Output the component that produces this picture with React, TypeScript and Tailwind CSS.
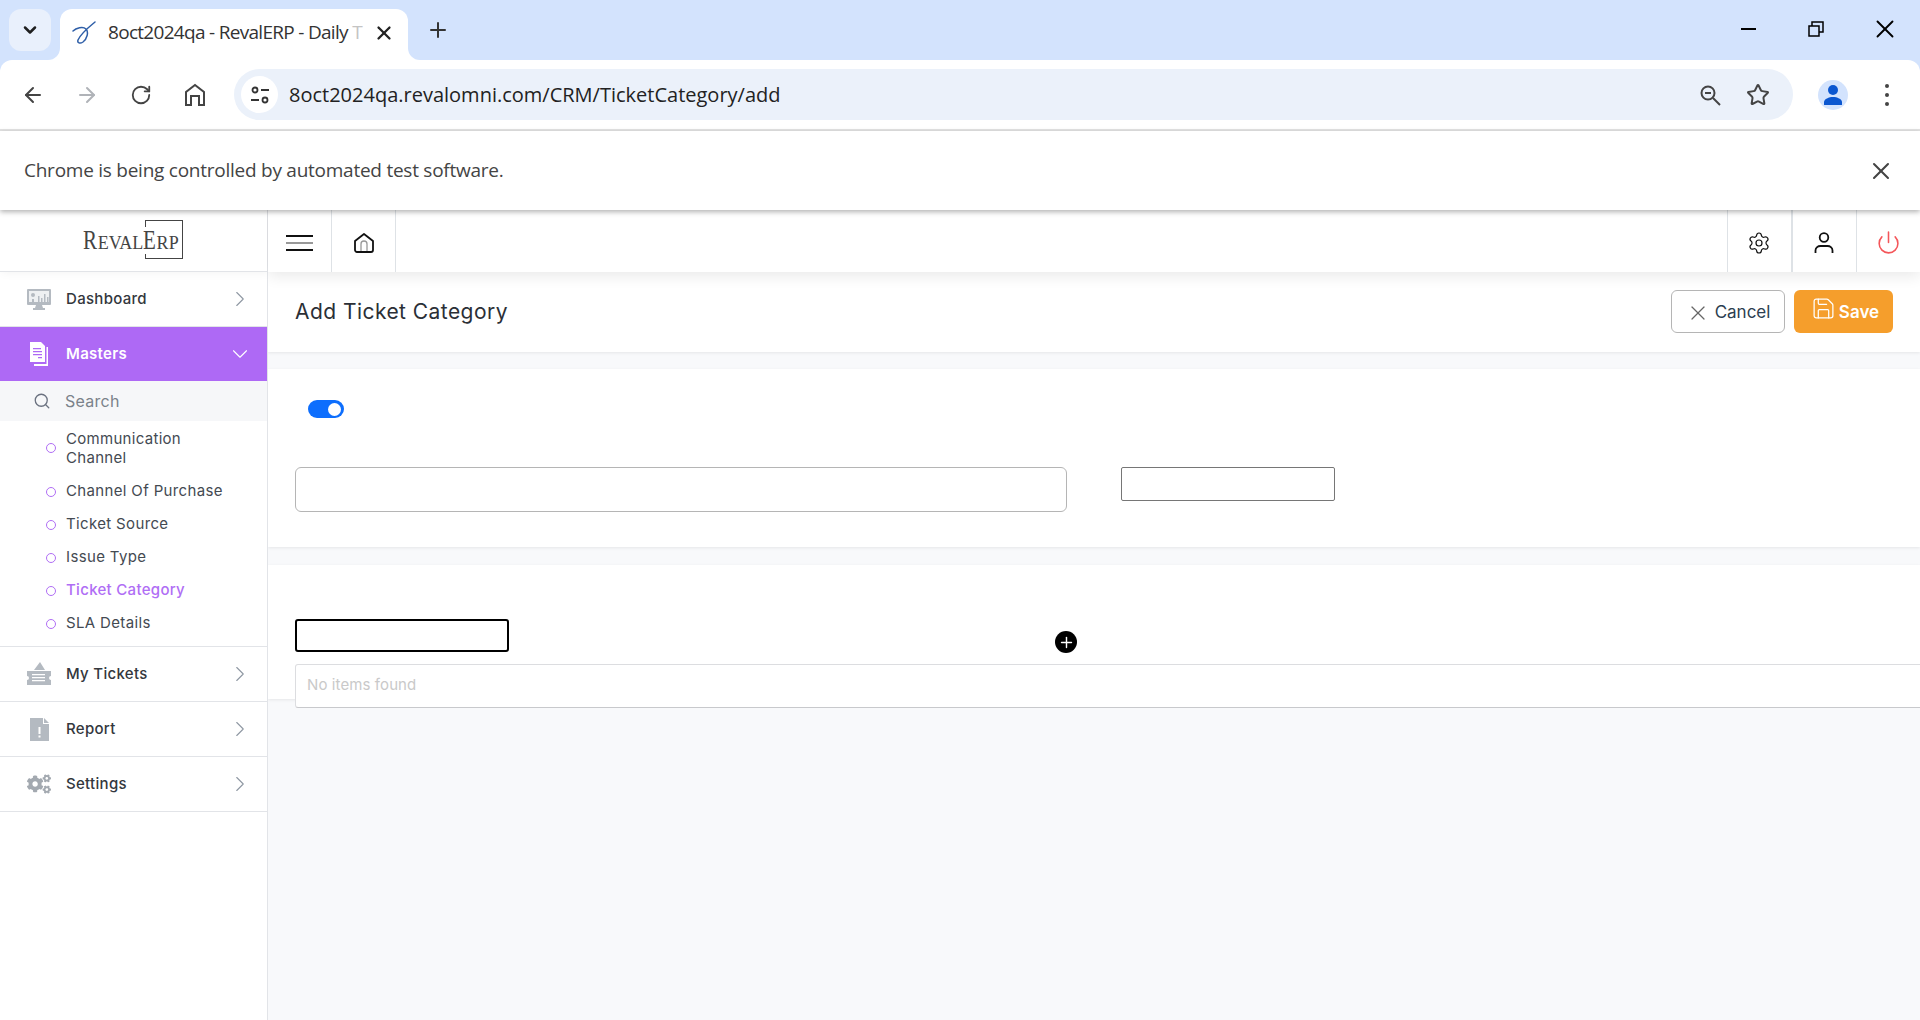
import { ArrowLeft, ArrowRight, ChevronDown, ChevronRight, Plus, Power, RotateCw, Save, Search, Settings, Star, X } from "lucide-react";
import { FaCogs } from "react-icons/fa";

const subItems = ["Channel Of Purchase", "Ticket Source", "Issue Type", "Ticket Category", "SLA Details"];

function Ring() {
  return <span className="block h-[10px] w-[10px] shrink-0 rounded-full border-[1.5px] border-[#b06ef5]" />;
}

function DashIcon() {
  return (
    <svg width="24" height="21" viewBox="0 0 24 21" fill="#b4bac1">
      <path d="M1 0h22a1 1 0 0 1 1 1v14a1 1 0 0 1-1 1H1a1 1 0 0 1-1-1V1a1 1 0 0 1 1-1z" />
      <path d="M2 2h20v11H2z" fill="#eef0f2" />
      <path d="M9 16h6l1 3H8zM6 19h12v2H6z" />
      <circle cx="6" cy="6" r="2" />
      <path d="M11 7h1.5v6H11zM14 9h1.5v4H14zM17 5h1.5v8H17zM20 8h1.5v5H20zM5 10h2v3H5z" />
    </svg>
  );
}

function DocsIcon() {
  return (
    <svg width="18" height="24" viewBox="0 0 18 24" fill="#fff">
      <path d="M0 0h11l4 4v16H0z" />
      <path d="M16.500 5H18v19H4v-2h12.500z" />
      <path d="M3 6h8v1.300H3zM3 9h9v1.300H3zM3 12h9v1.300H3zM8 15h4v1.300H8z" fill="#ae69f5" />
    </svg>
  );
}

function TicketIcon() {
  return (
    <svg width="24" height="24" viewBox="0 0 24 24" fill="#b4bac1">
      <path d="M7 8l6-8 5 8z" />
      <path d="M0 9h24v5a2 2 0 0 0 0 4v5H0v-5a2 2 0 0 0 0-4z" />
      <path d="M5 12h13v1.300H5zM5 15h13v1.300H5zM5 18h13v1.300H5z" fill="#fff" />
    </svg>
  );
}

function ReportIcon() {
  return (
    <svg width="19" height="23" viewBox="0 0 19 23" fill="#b4bac1">
      <path d="M0 0h13v6h6v17H0z" />
      <path d="M14 0l5 5h-5z" />
      <path d="M8.500 9h2v7h-2zM8.500 17.500h2v2h-2z" fill="#fff" />
    </svg>
  );
}

function NavRow({ label, icon }: { label: string; icon: React.ReactNode }) {
  return (
    <div className="flex h-[55px] items-center border-b border-[#e2e4e8] pr-[14px]">
      <span className="flex w-[66px] shrink-0 items-center justify-center pl-[13px] pr-[1px]">{icon}</span>
      <span className="flex-1 text-[15px] font-medium tracking-[0.3px] text-[#33373d]">{label}</span>
      <ChevronRight size={26} strokeWidth={1} className="text-[#8f98a3]" />
    </div>
  );
}

function HeadCell({ children }: { children: React.ReactNode }) {
  return <div className="flex h-full w-[64px] items-center justify-center border-r border-[#dee2e6] pt-[3px]">{children}</div>;
}

function BarButton({ children }: { children: React.ReactNode }) {
  return <div className="flex h-[54px] w-[54px] shrink-0 items-center justify-center">{children}</div>;
}

export default function App() {
  return (
    <div className="flex h-[1020px] w-[1920px] flex-col overflow-hidden bg-white font-['Open_Sans',sans-serif]">
      {/* browser tab strip */}
      <div className="flex h-[60px] shrink-0 items-start bg-[#d3e3fd] pt-[9px]">
        <div className="ml-[9px] flex h-[42px] w-[42px] items-center justify-center rounded-[12px] bg-[#e9f0fc]">
          <ChevronDown size={20} strokeWidth={3} className="text-[#1f1f1f]" />
        </div>
        <div className="relative ml-[9px] flex h-[51px] w-[348px] items-center rounded-t-[12px] bg-white pb-[4px]">
          <span className="absolute bottom-0 left-[-12px] h-[12px] w-[12px] bg-white">
            <span className="block h-full w-full rounded-br-[12px] bg-[#d3e3fd]" />
          </span>
          <span className="absolute bottom-0 right-[-12px] h-[12px] w-[12px] bg-white">
            <span className="block h-full w-full rounded-bl-[12px] bg-[#d3e3fd]" />
          </span>
          <svg width="24" height="24" viewBox="0 0 24 24" fill="none" className="ml-[12px]">
            <path d="M23 1C17 6 9 12 6 19c-1 3 2 4 5 2 4-3 6-10 3-13C11 5 4 7 1 10" stroke="#2f5fa8" strokeWidth="1.500" strokeLinecap="round" />
          </svg>
          <span className="ml-[12px] w-[251px] whitespace-nowrap text-[19px] tracking-[-0.7px] text-[#333]">8oct2024qa - RevalERP - Daily <span className="text-[#c4c4c4]">T</span></span>
          <X size={22} strokeWidth={2.500} className="ml-[14px] text-[#222]" />
        </div>
        <Plus size={24} strokeWidth={2} className="ml-[18px] mt-[9px] text-[#333]" />
        <div className="ml-auto flex items-center pr-[5px] pt-[5px]">
          <span className="mr-[52px] block h-[2px] w-[15px] bg-black" />
          <svg width="16" height="16" viewBox="0 0 16 16" fill="none" stroke="#000" strokeWidth="1.500" className="mr-[46px]">
            <path d="M1 5h10v10H1zM4 5V1h11v10h-4" />
          </svg>
          <X size={30} strokeWidth={1.500} className="mr-[15px] text-black" />
        </div>
      </div>

      {/* browser toolbar */}
      <div className="flex h-[71px] shrink-0 items-start border-b-2 border-[#e3e3e3] bg-[#d3e3fd]">
        <div className="flex h-full w-full items-center rounded-t-[12px] bg-white pl-[6px] pr-[6px]">
          <BarButton><ArrowLeft size={24} strokeWidth={2} className="text-[#444]" /></BarButton>
          <BarButton><ArrowRight size={24} strokeWidth={2} className="text-[#b0b3b8]" /></BarButton>
          <BarButton><RotateCw size={22} strokeWidth={2} className="text-[#444]" /></BarButton>
          <BarButton>
            <svg width="22" height="24" viewBox="0 0 22 24" fill="none" stroke="#444" strokeWidth="2">
              <path d="M2 22V9l9-7 9 7v13h-5v-9H7v9z" />
            </svg>
          </BarButton>
          <div className="ml-[12px] mr-[13px] flex h-[51px] flex-1 items-center rounded-full bg-[#ebf1fa] pl-[7px] pr-[23px]">
            <span className="flex h-[37px] w-[37px] items-center justify-center rounded-full bg-white">
              <svg width="20" height="20" viewBox="0 0 20 20" fill="none" stroke="#333" strokeWidth="1.800">
                <circle cx="5" cy="5" r="2.500" />
                <path d="M11 5h8M1 15h8" />
                <circle cx="15" cy="15" r="2.500" />
              </svg>
            </span>
            <span className="ml-[11px] flex-1 text-[20px] text-[#222]">8oct2024qa.revalomni.com/CRM/TicketCategory/add</span>
            <svg width="24" height="24" viewBox="0 0 24 24" fill="none" stroke="#444" strokeWidth="2" className="mr-[24px]">
              <circle cx="10" cy="10" r="6.500" />
              <path d="M7 10h6" />
              <path d="M15 15l7 7" />
            </svg>
            <Star size={24} strokeWidth={2} className="text-[#444]" />
          </div>
          <BarButton>
            <span className="flex h-[30px] w-[30px] items-center justify-center rounded-full bg-[#d3e3fd]">
              <svg width="20" height="22" viewBox="0 0 20 22" fill="#0b57d0">
                <circle cx="10" cy="6" r="5" />
                <path d="M1 21v-3c0-3 5-5 9-5s9 2 9 5v3z" />
              </svg>
            </span>
          </BarButton>
          <BarButton>
            <span className="flex flex-col gap-[5px]">
              <span className="block h-[4px] w-[4px] rounded-full bg-[#444]" />
              <span className="block h-[4px] w-[4px] rounded-full bg-[#444]" />
              <span className="block h-[4px] w-[4px] rounded-full bg-[#444]" />
            </span>
          </BarButton>
        </div>
      </div>

      {/* automation infobar */}
      <div className="relative z-20 flex h-[79px] shrink-0 items-center justify-between bg-white pl-[24px] pr-[25px] shadow-[0_2px_5px_rgba(0,0,0,0.3)]">
        <span className="text-[19px] tracking-[-0.25px] text-[#444]">Chrome is being controlled by automated test software.</span>
        <X size={28} strokeWidth={1.750} className="text-[#444]" />
      </div>

      {/* app */}
      <div className="flex min-h-0 flex-1 font-[Inter,sans-serif]">
        <aside className="w-[268px] shrink-0 border-r border-[#e2e4e8] bg-white">
          <div className="flex h-[62px] items-center border-b border-[#e2e4e8] pl-[83px] shadow-[2px_0_10px_rgba(0,0,0,0.06)]">
            <div className="relative mb-[3px] flex h-[39px] w-[100px] items-baseline pt-[6px] font-['Liberation_Serif',serif] leading-none text-[#444]">
              <span className="mr-[-4px] inline-block origin-left scale-x-[0.75] text-[28px]">R</span>
              <span className="text-[18px]">EVAL</span>
              <span className="mr-[-4px] inline-block origin-left scale-x-[0.75] text-[28px]">E</span>
              <span className="text-[18px] tracking-[0.3px]">RP</span>
              <span className="absolute left-[62px] top-0 h-[7px] w-[38px] border-x-[1.5px] border-t-[1.5px] border-x-[#444] border-t-[#444]" />
              <span className="absolute bottom-0 left-[62px] h-[5px] w-[38px] border-x-[1.5px] border-b-[1.5px] border-x-[#444] border-b-[#444]" />
              <span className="absolute bottom-0 left-[98.5px] top-0 border-r-[1.5px] border-[#444]" />
            </div>
          </div>
          <NavRow label="Dashboard" icon={<DashIcon />} />
          <div className="flex h-[54px] items-center bg-[#ae69f5] pr-[14px] text-white">
            <span className="flex w-[66px] shrink-0 items-center justify-center pl-[13px] pr-[1px]"><DocsIcon /></span>
            <span className="flex-1 text-[15px] font-semibold tracking-[0.3px]">Masters</span>
            <ChevronDown size={26} strokeWidth={1} />
          </div>
          <div className="flex h-[40px] items-center gap-[14px] bg-[#f6f7f9] pl-[33px]">
            <Search size={18} strokeWidth={1.750} className="text-[#6b7280]" />
            <span className="text-[16px] tracking-[0.25px] text-[#7b828a]">Search</span>
          </div>
          <div className="border-b border-[#e2e4e8] pb-[9px] pl-[46px] pt-[7px]">
            <div className="mb-[11px] flex h-[39px] items-center gap-[10px]">
              <Ring />
              <span className="w-[130px] text-[15px] leading-[19px] tracking-[0.3px] text-[#444a52]">Communication Channel</span>
            </div>
            {subItems.map((item) => (
              <div key={item} className="mt-[6px] flex h-[27px] items-center gap-[10px]">
                <Ring />
                <span className={item === "Ticket Category" ? "text-[15px] font-medium tracking-[0.3px] text-[#b06ef5]" : "text-[15px] tracking-[0.35px] text-[#444a52]"}>{item}</span>
              </div>
            ))}
          </div>
          <NavRow label="My Tickets" icon={<TicketIcon />} />
          <NavRow label="Report" icon={<ReportIcon />} />
          <NavRow label="Settings" icon={<FaCogs size={24} className="text-[#a3a9b0]" />} />
        </aside>

        <main className="min-w-0 flex-1 overflow-hidden bg-[#f8f9fb]">
          <header className="relative z-10 flex h-[62px] items-center justify-between bg-white shadow-[0_4px_14px_rgba(0,0,0,0.09)]">
            <div className="flex h-full">
              <HeadCell>
                <span className="flex flex-col gap-[5px]">
                  <span className="block h-[2px] w-[27px] bg-[#111]" />
                  <span className="block h-[2px] w-[27px] bg-[#999]" />
                  <span className="block h-[2px] w-[27px] bg-[#111]" />
                </span>
              </HeadCell>
              <HeadCell>
                <svg width="20" height="20" viewBox="0 0 20 20" fill="none">
                  <path d="M7 18v-7a3 3 0 0 1 6 0v7" stroke="#999" strokeWidth="1.300" />
                  <path d="M1 17V8l9-7 9 7v9a2 2 0 0 1-2 2H3a2 2 0 0 1-2-2z" stroke="#111" strokeWidth="1.800" strokeLinejoin="round" />
                </svg>
              </HeadCell>
            </div>
            <div className="flex h-full">
              <div className="flex h-full w-[64px] items-center justify-center border-l border-[#dee2e6] pt-[3px]">
                <Settings size={24} strokeWidth={1.200} className="mr-[1px] text-[#111]" />
              </div>
              <div className="flex h-full w-[65px] items-center justify-center border-l-2 border-[#dee2e6] pt-[3px]">
                <svg width="20" height="22" viewBox="0 0 20 22" fill="none" stroke="#111" strokeWidth="1.800" className="mr-[2px]">
                  <circle cx="10" cy="5.500" r="4.300" />
                  <path d="M1.500 21v-2.500c0-3 2.500-4.500 5-4.500h7c2.500 0 5 1.500 5 4.500V21" />
                </svg>
              </div>
              <div className="flex h-full w-[64px] items-center justify-center border-l border-[#dee2e6] pt-[3px]">
                <Power size={25} strokeWidth={1.500} className="mr-[1px] text-[#f4565a]" />
              </div>
            </div>
          </header>

          <div className="flex h-[80px] items-center justify-between bg-white pl-[27px] pr-[27px] shadow-[0_1px_3px_rgba(0,0,0,0.08)]">
            <h1 className="text-[21px] tracking-[0.45px] text-[#2b2f36]">Add Ticket Category</h1>
            <div className="mb-[2px] flex gap-[9px]">
              <button className="flex h-[43px] w-[114px] items-center justify-center gap-[5px] rounded-[6px] border border-[#b5b5b5] bg-white pt-[3px] text-[17px] text-[#2c3e50]">
                <X size={24} strokeWidth={1.200} className="text-[#666]" />
                Cancel
              </button>
              <button className="flex h-[43px] w-[99px] items-center justify-center gap-[3px] rounded-[6px] bg-[#f59e2c] pl-[3px] pt-[3px] text-[17px] font-semibold text-white">
                <Save size={25} strokeWidth={1.200} className="mb-[8px]" />
                Save
              </button>
            </div>
          </div>

          <section className="mt-[17px] h-[178px] bg-white pl-[27px] pt-[31px] shadow-[0_1px_3px_rgba(0,0,0,0.08)]">
            <div className="ml-[13px] flex h-[18px] w-[36px] items-center justify-end rounded-full bg-[#0d6efd] pr-[3px]">
              <span className="block h-[13px] w-[13px] rounded-full bg-white" />
            </div>
            <div className="mt-[49px] flex items-start">
              <div className="h-[45px] w-[772px] rounded-[6px] border border-[#b5b5b5] bg-white" />
              <div className="ml-[54px] h-[34px] w-[214px] rounded-[2px] border border-[#767676] bg-white" />
            </div>
          </section>

          <section className="mt-[18px] h-[134px] bg-white pl-[27px] pt-[54px] shadow-[0_1px_3px_rgba(0,0,0,0.08)]">
            <div className="flex items-start">
              <div className="h-[33px] w-[214px] rounded-[3px] border-2 border-black bg-white" />
              <span className="ml-[546px] mt-[12px] flex h-[22px] w-[22px] items-center justify-center rounded-full bg-black">
                <Plus size={17} strokeWidth={2} className="text-white" />
              </span>
            </div>
            <div className="mt-[11px] flex h-[44px] w-[1700px] items-center rounded-[3px] border border-[#dcdde0] border-b-[#c8c9cc] bg-white pb-[2px] pl-[11px] text-[15px] tracking-[0.1px] text-[#c9c9c9]">
              No items found
            </div>
          </section>
        </main>
      </div>
    </div>
  );
}
